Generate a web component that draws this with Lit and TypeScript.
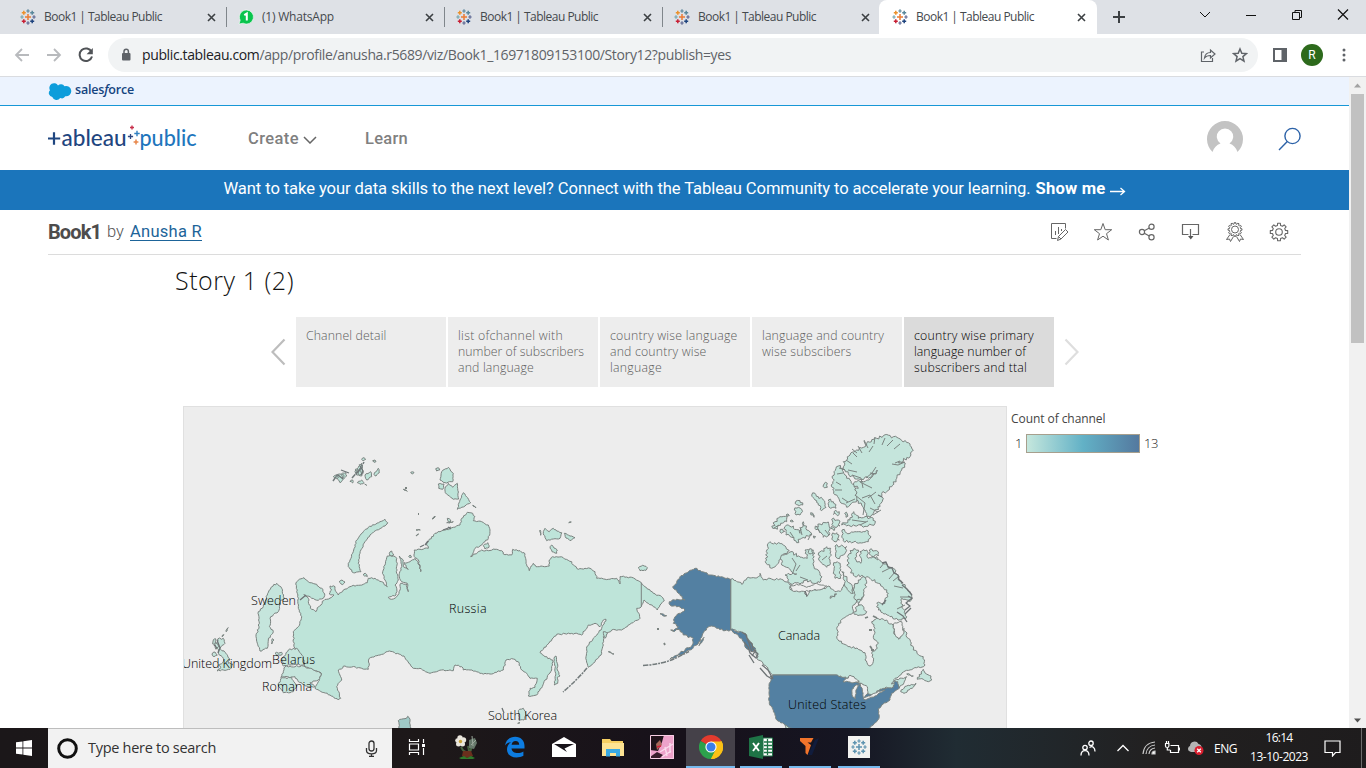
import { LitElement, html, svg, css } from "lit";
import { customElement, property } from "lit/decorators.js";

/** One line of text, tracked so that it fills a given width. */
@customElement("fit-text")
class FitText extends LitElement {
  @property({ type: Number }) w = 0;
  static styles = css`
    :host { display: inline-block; white-space: nowrap; }
  `;
  render() {
    return html`<span><slot></slot></span>`;
  }
  firstUpdated() {
    const s = this.renderRoot.querySelector("span") as HTMLElement;
    const n = (this.textContent || "").trim().length;
    if (!this.w || !n) return;
    s.style.letterSpacing = (this.w - s.getBoundingClientRect().width) / n + "px";
  }
}

/* ---------- map geometry ---------- */
type Pt = [number, number, boolean];
type Src = [number, number, string];

// A point starting with "!" is reached by a straight border; the others by coastline.
const points = ([ox, oy, s]: Src): Pt[] =>
  s.trim().split(/\s+/).map((t) => {
    const straight = t[0] === "!";
    const [x, y] = t.replace("!", "").split(",").map(Number);
    return [ox + x / 3, oy + y / 3, straight];
  });

const coast = (rough: number, ...src: Src[]) => {
  const p = src.flatMap(points);
  let seed = 7 + p.length * 13;
  const rnd = () => {
    seed = (seed * 16807) % 2147483647;
    return seed / 2147483647 - 0.5;
  };
  let d = "M" + p[0][0].toFixed(1) + "," + p[0][1].toFixed(1);
  for (let i = 1; i <= p.length; i++) {
    const a = p[i - 1];
    const b = p[i % p.length];
    const len = Math.hypot(b[0] - a[0], b[1] - a[1]) || 1;
    const n = b[2] ? 1 : Math.max(1, Math.round(len / 1.7));
    for (let k = 1; k <= n; k++) {
      const j = k < n ? rnd() * rough : 0;
      const x = a[0] + ((b[0] - a[0]) * k) / n - ((b[1] - a[1]) / len) * j;
      const y = a[1] + ((b[1] - a[1]) * k) / n + ((b[0] - a[0]) / len) * j;
      d += "L" + x.toFixed(1) + "," + y.toFixed(1);
    }
  }
  return d + "Z";
};

const W = (s: string): Src => [180, 440, s];
const E = (s: string): Src => [420, 450, s];
const N = (s: string): Src => [630, 550, s];
const A = (s: string): Src => [750, 420, s];

const russia = coast(1.4,
  W("347,432 358,418 372,413 385,425 405,432 425,445 434,462 430,475 415,481 395,475 372,463 385,475 388,495 395,508 408,515 412,503 423,495 427,484 440,478 455,472 462,465 448,462 455,450 450,438 465,440 468,455 475,465 490,450 510,440 530,436 550,433 562,428 565,415 585,415 605,425 622,440 615,420 608,395 615,375 622,348 640,348 650,355 650,400 655,420 645,435 650,445 648,465 625,472 635,478 650,470 660,450 662,430 680,432 685,455 682,430 665,425 657,405 665,380 658,348 670,360 670,380 685,388 672,368 690,365 705,355 718,375 722,395 715,360 703,350 703,330"),
  E("0,298 25,295 20,280 45,250 75,240 100,232 120,225 125,205 142,187 158,190 165,200 160,212 185,215 205,225 210,240 205,265 185,285 165,295 152,320 165,312 185,300 205,302 225,298 245,302 250,312 275,315 278,298 300,302 315,312 318,340 328,362 340,340 348,350 388,348 388,330 398,320 430,323 455,335 460,345 475,358 510,355 525,365 530,385 565,388 590,385 600,402 600,380 635,382 664,398 700,430 725,440 733,452 720,465 712,480 700,470 685,460 672,450 664,470 650,475 660,505 625,525 605,540 575,540 550,560 548,590 545,610 525,635 505,652 498,620 500,590 520,565 545,535 558,508 550,510 540,530 525,520 505,525 485,555 465,550 410,553 360,608 375,620 398,630 395,660 350,735 325,738 330,715 345,712 352,685 330,685 320,670 305,660 295,635 280,627 258,630 250,660 210,672 180,670 150,660 130,660 125,650 105,645 100,662 65,660 30,670 0,655"),
  W("700,685 672,648 628,633 600,645 568,655 565,688 545,685 495,678 475,690 485,720 470,740 482,775 475,780 450,765 405,745 415,725 424,700 375,680 372,660 350,628 342,620 340,575 355,560 365,530 355,500 352,450"));

const eastIsles = [
  W("520,398 505,380 505,370 520,335 530,300 550,275 565,262 600,245 615,238 623,248 615,258 590,270 570,285 555,305 540,340 535,370 543,395"),
  W("460,110 478,102 498,98 500,108 480,128 474,118"), W("525,95 545,70 550,95 545,108 530,105"),
  W("526,88 534,90 532,98"), W("538,74 546,76 542,84"), W("535,96 542,92 546,102 538,106"), W("484,104 492,106 488,114"), W("468,108 476,112 470,116"),
  W("555,105 572,95 575,110 560,120"), W("582,103 595,85 598,98 588,108"), W("532,128 545,120 552,128 540,133"),
  W("545,58 552,53 557,58 550,63"), W("578,62 585,60 588,65 582,67"), W("510,124 518,120 518,129"), W("554,132 560,136"), W("692,97 702,97 698,102"),
  W("670,148 682,154"), W("478,426 486,420 495,426 488,434"), W("550,405 556,400 562,410"), W("628,340 635,333 641,345 630,347"),
  W("758,237 765,229"), W("708,288 716,282"), W("708,270 721,270"), W("686,350 690,345 694,352"),
  E("47,56 54,53 59,60 50,63"), E("65,65 85,52 100,70 98,95 75,98 60,90"), E("55,102 72,102 68,118 56,115"),
  E("75,115 85,100 98,112 112,100 116,147 100,148 88,138 76,128"), E("130,128 152,158 135,168 112,178 120,150"), E("158,166 168,174"),
  E("82,205 92,210 88,220"), E("37,207 46,200"), E("80,218 100,215"), E("370,250 375,235 388,245 400,235 410,243 425,248 420,265 400,267 380,272"),
  E("433,250 450,258 465,263 450,272 438,264"), E("390,295 395,285 402,294 412,300 410,310 396,305"), E("446,218 454,216"), E("360,240 362,256"),
  E("655,354 668,346 682,353 678,361 660,362"), E("402,625 408,618 412,640 412,660 420,678 412,682 413,700 403,705 407,670"),
  E("550,545 562,550 555,565"), E("565,605 582,612"), E("190,287 204,278 207,292 195,297"),
].map((s) => coast(1.1, s));

const europe = [
  W("290,430 275,440 262,465 250,500 235,515 237,560 228,590 240,633 262,625 265,600 280,575 268,560 272,530 295,515 300,485 313,475 305,445"),
  W("113,597 130,595 135,610 120,625 138,640 148,655 145,670 158,672 150,688 130,690 112,693 122,682 115,675 128,668 130,655 118,645 112,625"),
  W("96,642 105,636 112,645 102,650"), W("100,600 108,597 106,610 98,612"), W("138,575 145,563"), W("106,608 116,620 108,628"), W("126,590 132,584"),
  W("275,612 282,600 277,596"), W("325,630 350,625 370,650 372,675 340,674 310,678 305,660"), W("285,640 305,637 305,645 290,647"),
  W("315,680 370,678 400,690 424,700 415,720 390,728 405,740 385,740 355,725 345,710 302,712"),
  W("302,716 335,712 350,738 340,755 310,758 295,735"),
  E("295,782 310,775 318,795 312,810 298,812"), E("293,820 300,818"),
].map((s) => coast(1.5, s));

const canada = coast(2.4,
  N("302,88 318,92 335,103 350,85 385,80 390,70 400,90 420,85 460,90 485,105 480,118 500,120 520,118 530,140 540,115 560,120 600,110 615,125 635,120 645,100 660,110 668,130 675,100 690,110 700,130 695,150 670,165 668,190 640,205 622,230 620,260 635,280 660,290 690,300 705,308 705,330 720,348 730,335 725,310 742,295 742,275 730,262 735,235 725,215 740,205 770,210 790,230 795,255 810,265 822,235 835,265 850,300 880,320 885,345 860,353 825,363 795,385 785,402 800,393 790,412 750,418 735,432 708,440 712,425 700,405 690,400 660,385 635,382 618,375 !428,375 410,350 385,330 375,305 370,290 345,250 302,240 !302,88"));

const arctic = [
  A("285,150 280,125 300,105 320,90 345,80 350,70 380,55 400,47 430,50 455,62 475,68 490,90 480,110 445,128 466,130 455,150 440,175 425,200 410,215 395,220 398,240 390,260 370,280 350,292 345,270 335,255 320,240 310,215 325,205 305,195 320,185 350,180 370,165 382,150 360,172 330,178 300,170"),
  A("265,138 278,145 285,165 300,180 312,200 320,230 320,245 300,255 290,262 270,245 260,225 248,210 248,185 252,155"),
  A("275,315 300,300 312,275 325,295 345,290 370,295 375,310 355,318 300,318"),
  A("276,330 300,340 330,335 355,333 363,350 355,365 320,368 280,362"),
  A("245,298 265,300 270,318 250,318"), A("245,345 260,338 268,360 250,362"), A("252,275 268,275 268,283 250,283"), A("284,280 292,282 288,292"),
  A("55,370 75,368 100,375 118,392 97,410 85,430 65,445 48,430"),
  A("92,412 120,396 155,412 172,415 165,390 190,390 192,440 210,460 213,482 190,490 170,480 150,492 118,488 105,465 140,462 95,435"),
  A("205,405 230,380 242,385 240,425 230,442 215,430"), A("255,378 290,380 280,405 262,415"), A("250,435 262,425 272,440 272,475 255,475"),
  A("295,440 295,405 310,387 325,390 318,420 332,430 330,395 350,390 355,415 380,410 400,430 430,445 450,480 468,505 485,525 480,545 455,535 455,560 470,590 455,600 420,590 385,570 380,550 405,550 415,520 385,490 360,475 310,465"),
  A("358,390 380,392 385,408 362,406"), A("313,583 325,550 350,575 330,585"), A("340,470 350,490 340,530 320,545 310,510 325,480"), A("275,455 300,490 310,520 285,500"),
  A("133,270 145,262 155,268 150,285 138,285"), A("135,250 150,242 158,255"), A("68,325 75,305 90,290 112,288 110,305 92,310 82,328"),
  A("105,320 130,318 150,340 160,305 170,330 185,345 155,355 140,368 125,352 108,345"),
  A("185,225 195,220 205,230 220,240 228,262 215,272 205,255 195,240"), A("235,240 250,245 258,265 242,265"),
  A("195,325 210,312 235,306 240,325 238,345 220,352 210,335"), A("222,192 232,190 232,202 224,204"), A("182,278 192,292"), A("108,285 118,287"), A("120,303 130,305"), A("240,535 260,522"),
  A("90,335 98,328 104,334 94,340"), A("176,392 186,388 190,400 180,402"), A("190,348 197,350 192,355"), A("242,325 250,322 252,332"),
].map((s) => coast(3, s));

const atlantic = [
  N("862,388 880,358 886,370 903,378 905,390 895,395 880,388"), N("785,402 800,388 830,380 822,398 808,414 800,398"),
  N("812,425 830,408 858,400 850,412 822,430"), N("830,372 850,378"), N("465,526 505,530 540,540 470,540"),
].map((s) => coast(1.8, s));

const usa = [
  coast(1.2, N("428,375 !618,375 635,382 660,387 690,402 700,420 710,432 735,432 750,418 790,412 795,393 803,395 808,415 785,430 780,450 755,465 745,480 748,500 740,515 710,540 !500,540 475,532 462,522 440,510 430,480 418,460 417,430 418,400")),
  coast(1.7, N("302,88 !302,240 285,242 265,235 245,228 230,235 215,262 200,285 180,300 150,315 120,328 150,308 185,288 190,265 160,255 150,240 128,243 145,230 130,220 135,200 165,180 160,175 120,165 118,155 140,148 165,150 145,130 128,110 140,100 150,80 175,65 195,55 215,65 240,75 275,80")),
  coast(2, N("302,238 320,245 345,250 358,275 377,298 370,306 352,298 335,265 312,250")),
  coast(1, N("207,287 220,270 222,262 210,278")), coast(1, N("90,191 110,197 104,199")), coast(1, N("122,240 132,243")),
];
const lakes = [
  coast(1.5, N("640,396 660,376 672,380 688,394 672,398 660,396")), coast(1, N("668,440 666,418 678,404 688,404 678,420 676,446")),
  coast(1, N("690,400 712,410 714,430 700,445 697,420")), coast(1, N("700,446 725,434 745,424 765,420 735,438 705,450")),
  coast(1.4, N("790,222 815,215 822,250 806,268 794,252")),
  coast(1.5, N("480,112 500,102 530,112 560,100 590,108 575,118 520,124 490,124")),
];
const inlets = "M864,440l4,8M875,437l-1,7M885,438l-3,7M893,440l-6,6M900,444l-6,5M873,446l-4,6M852,449l5,4M858,446l4,7M864,441l2,5M905,462l-7,3l-6,-1M900,461l-5,2M846,460l6,4M853,453l4,4M866,478l6,-5l4,-6M870,473l6,1M848,470l9,2M852,475l9,3l2,10M860,482l12,6M855,495l10,8l-2,12M862,498l8,-3l5,9M876,492l-8,6M870,508l8,4M873,515l8,-5M842,498l6,4M836,482l5,3M835,490l7,0M839,468l6,2M837,474l6,-1M846,503l9,-4M852,520l14,2M860,525l8,-4M878,560l-6,-4M885,562l-5,6M890,568l-8,4M895,572l-6,7M898,577l-5,4M903,588l-9,-2M910,597l-10,0M905,605l-8,4M790,532l4,6M800,527l2,8M808,540l3,-6M817,527l3,6M774,528l5,-3M825,530l4,5M792,558l4,6l-3,8M800,565l-4,6M808,580l-8,-3M822,560l5,-4";
const rocks = "M742,632l4,3l2,6l4,3l1,5l5,5l-2,4l-6,-5l-2,-6l-4,-5M748,640l4,12M756,650l-4,6M762,665l6,5l5,9M760,668l7,8l5,3M749,655l5,8M773,678l-3,-2M886,600l-4,5M908,596l4,2l-6,5l4,3l-5,4M911,608l-6,6M217,640l3,8l-2,5M214,645l3,3M360,466l3,5l-2,4M356,474l5,-6M338,475l5,4M341,470l8,3M502,708l2,5M425,545l3,-4M420,547l4,-2M443,530l8,-3M448,527l3,2M300,600l6,-5M878,495l4,2M882,563l4,-1l2,5l4,1l2,5l4,2l1,5l4,3M902,585l5,4l5,6M805,591l2,5M897,612l6,4l4,6";

const fitted = (x: number, y: number, w: number, t: string) =>
  svg`<text class="place" x=${x} y=${y} textLength=${w} lengthAdjust="spacing">${t}</text>`;

/* ---------- icons ---------- */
const cross = (x: number, y: number, r: number, c: string, w = 1.2) =>
  svg`<path d="M${x - r},${y}h${2 * r}M${x},${y - r}v${2 * r}" stroke=${c} stroke-width=${w} fill="none"/>`;
const mark = (mono = "") => html`<svg width="16" height="16" viewBox="0 0 16 16">
  ${cross(8, 8, 3, mono || "#eb7b35", 1.5)} ${cross(8, 2, 1.7, mono || "#5b879b")} ${cross(8, 14, 1.7, mono || "#5b6591")}
  ${cross(2, 8, 1.7, mono || "#74a5ad")} ${cross(14, 8, 1.7, mono || "#5b6591")} ${cross(3.8, 3.8, 2, mono || "#eb912c", 1.5)}
  ${cross(12.2, 3.8, 2, mono || "#59879b", 1.5)} ${cross(3.8, 12.2, 2, mono || "#c72035", 1.5)} ${cross(12.2, 12.2, 2, mono || "#1f447e", 1.5)}
</svg>`;
const cogPath = (cx: number, cy: number, r1: number, r2: number, n: number) => {
  let d = "";
  for (let i = 0; i < n; i++) {
    [[-0.3, r1], [-0.2, r2], [0.2, r2], [0.3, r1]].forEach(([o, r]) => {
      const a = ((i + o) * 2 * Math.PI) / n;
      d += (d ? "L" : "M") + (cx + Math.cos(a) * r).toFixed(2) + "," + (cy + Math.sin(a) * r).toFixed(2);
    });
  }
  return d + "Z";
};
const whatsapp = html`<svg width="16" height="16" viewBox="0 0 16 16"><path d="M8.500 1a7 7 0 1 1-3.300 13.200L1 15l1.200-3.800A7 7 0 0 1 8.500 1z" fill="#09c44d" stroke="#fff" stroke-width=".6"/><path d="M6.300 6.200L8.800 4.600V11.500" stroke="#fff" stroke-width="2" fill="none"/></svg>`;
const closeX = html`<svg width="9" height="9" viewBox="0 0 9 9"><path d="M1 1l7 7M8 1l-7 7" stroke="#3c4043" stroke-width="1.6"/></svg>`;

@customElement("app-root")
class AppRoot extends LitElement {
  static styles = css`
    :host { display: block; width: 1366px; height: 768px; overflow: hidden; background: #fff; font-family: "Open Sans", "Noto Sans", sans-serif; color: #202124; }
    * { box-sizing: border-box; }
    svg { display: block; flex: none; }
    .win { display: flex; flex-direction: column; height: 768px; }
    .tabs { height: 34px; flex: none; background: #dee1e6; display: flex; padding-left: 9px; font-size: 12px; }
    .tab { width: 218px; height: 34px; display: flex; align-items: center; padding: 0 10px 0 11px; border-right: 1px solid transparent; position: relative; }
    .sep::after { content: ""; position: absolute; right: -1px; top: 7px; width: 1px; height: 20px; background: #80868b; }
    .ttl { flex: 1; padding-left: 8px; color: #45494d; line-height: 16px; }
    .active { background: #fff; border-radius: 8px 8px 0 0; margin-left: -2px; padding-left: 13px; width: 218px; }
    .plus { width: 44px; display: grid; place-items: center; }
    .wc { margin-left: 41px; display: flex; height: 29px; }
    .wc div { width: 46px; display: grid; place-items: center; }
    .bar { height: 43px; flex: none; display: flex; align-items: center; padding-left: 6px; border-bottom: 1px solid #dadce0; }
    .nav { width: 32px; display: grid; place-items: center; }
    .side { margin-left: 6px; }
    .omni { width: 1150px; height: 34px; border-radius: 17px; background: #f1f3f4; display: flex; align-items: center; margin-left: 6px; padding: 0 2px 0 13px; font-size: 14px; }
    .url { flex: 1; margin: -1px 0 0 11px; color: #5f6368; }
    .url b { font-weight: 400; color: #202124; }
    .oi { width: 32px; display: grid; place-items: center; }
    .me { width: 22px; height: 22px; border-radius: 50%; background: #2d6a1c; color: #fff; font: 12px/22px Roboto, sans-serif; text-align: center; }
    .view { height: 651px; flex: none; display: flex; }
    .page { width: 1349px; height: 651px; overflow: hidden; }
    .sb { width: 17px; background: #f1f1f1; display: flex; flex-direction: column; align-items: center; padding: 6px 0 5px; justify-content: space-between; }
    .thumb { width: 13px; height: 249px; background: #c1c1c1; margin-top: 6px; }
    .fill { flex: 1; }
    .sf { height: 29px; background: #ecf3fe; border-bottom: 1px solid #1797d6; padding: 0 48px; display: flex; align-items: center; }
    .sf fit-text { font: 600 12.5px/16px "Open Sans", sans-serif; color: #14437f; margin: -2px 0 0 3px; }
    .head { height: 64px; display: flex; align-items: center; padding: 1px 48px 0; }
    .menu { font: 500 16.5px/20px Roboto, sans-serif; color: #7f8080; display: flex; align-items: center; }
    .create { margin-left: 52px; width: 117px; }
    .create svg { margin: 3px 0 0 4px; }
    .logo { font: 500 23px Lato, sans-serif; }
    .right { margin-left: auto; display: flex; align-items: center; gap: 35px; margin-right: -1px; }
    .ban { height: 40px; background: #1b75bb; color: #fff; font: 400 16.6px/38px Roboto, sans-serif; display: flex; justify-content: center; align-items: center; padding-bottom: 2px; }
    .show { font-weight: 700; margin: 0 4px 0 5px; display: flex; }
    .ban svg { margin-top: 4px; }
    .tl { margin: 0 48px; height: 45px; border-bottom: 1px solid #dcdcdc; display: flex; align-items: center; font: 400 16.5px/20px Roboto, sans-serif; color: #555; }
    .tl h1 { margin: 0; font: 700 20px/22px Roboto, sans-serif; color: #4d4c4c; }
    .by { margin: 0 6px 0 6px; font-weight: 300; }
    .tl a { color: #1d6499; display: block; height: 18px; line-height: 18px; border-bottom: 1px solid #1d6499; }
    .acts { margin-left: auto; display: flex; }
    .acts div { width: 44px; display: grid; place-items: center; }
    .story { padding: 6px 0 0 175px; height: 62px; font: 300 25px/38px "Open Sans", sans-serif; color: #111; }
    .cards { display: flex; align-items: center; padding-left: 271px; height: 70px; gap: 2px; }
    .cards > svg:first-child { margin-right: 8px; }
    .cards > svg:last-child { margin-left: 8px; }
    .card { width: 150px; height: 70px; background: #ededed; color: #5c5c5c; font: 300 12.3px/16px "Open Sans", sans-serif; padding: 11px 0 0 10px; display: flex; flex-direction: column; align-items: flex-start; }
    .on { background: #dbdbdb; color: #000; }
    .viz { display: flex; margin: 19px 0 0 183px; height: 322px; overflow: hidden; }
    .map { width: 824px; height: 322px; background: #ededed; border: solid #e0e0e0; border-width: 1px 1px 0 1px; flex: none; }
    .place { font: 300 12.5px "Open Sans", sans-serif; fill: #000; }
    .legend { padding: 4px 0 0 4px; font: 400 12px/18px "Open Sans", sans-serif; color: #444; }
    .scale { display: flex; align-items: center; height: 19px; margin-top: 6px; padding-left: 4px; }
    .scale fit-text { font-weight: 300; margin-top: -2px; font-size: 13px; color: #222; }
    .ramp { width: 114px; height: 19px; border: 1px solid #a79f8d; background: linear-gradient(90deg, #c5e7dd, #62b1c6 50%, #54799f); margin: 0 4px 0 4px; }
    .task { height: 40px; flex: none; display: flex; color: #fff; background: linear-gradient(90deg, #1b1719 0, #1d1819 32%, #17111a 50%, #151522 62%, #202c33 70%, #222020 85%, #1e1c1d); }
    .start { width: 48px; display: grid; place-items: center; }
    .find { width: 344px; background: #f2f2f2; border-top: 1px solid #bdbdbd; display: flex; align-items: center; padding: 0 14px 1px 9px; font-size: 14.5px; color: #333; }
    .find fit-text { flex: 1; margin: -1px 0 0 10px; }
    .app { width: 49px; display: grid; place-items: center; border-bottom: 2px solid transparent; }
    .run { border-image: linear-gradient(90deg, transparent 10%, #76b9ed 10%, #76b9ed 92%, transparent 92%) 1; border-bottom: 2px solid; border-top: 0; border-left: 0; border-right: 0; }
    .cur { background: #454149; border-bottom-color: #76b9ed; margin-right: 1px; }
    .tray { margin-left: auto; display: flex; align-items: center; font-size: 12px; padding-right: 4px; }
    .people { margin-right: 21px; }
    .up { margin-right: 13px; }
    .wifi { margin-right: 8px; }
    .power { margin-right: 8px; }
    .cloud { margin-right: 9px; }
    .clock { display: flex; flex-direction: column; align-items: center; width: 60px; margin: -1px 15px 0 12px; line-height: 18.5px; }
    .edge { width: 1px; height: 40px; background: #6b6b6b; margin-left: 20px; }
  `;

  private tab(icon: unknown, title: string, w: number, cls: string) {
    return html`<div class="tab ${cls}">${icon}<div class="ttl"><fit-text w=${w}>${title}</fit-text></div>${closeX}</div>`;
  }

  private card(lines: [string, number][], on = false) {
    return html`<div class="card ${on ? "on" : ""}">${lines.map(([t, w]) => html`<fit-text w=${w}>${t}</fit-text>`)}</div>`;
  }

  private browser() {
    const t = "Book1 | Tableau Public";
    const k = (d: string, w = 1) => html`<div><svg width="12" height="12" viewBox="0 0 12 12"><path d=${d} fill="none" stroke="#111" stroke-width=${w}/></svg></div>`;
    return html`
      <div class="tabs">
        ${this.tab(mark(), t, 118, "sep")}${this.tab(whatsapp, "(1) WhatsApp", 72, "sep")}${this.tab(mark(), t, 118, "sep")}${this.tab(mark(), t, 118, "")}${this.tab(mark(), t, 118, "active")}
        <div class="plus"><svg width="12" height="12" viewBox="0 0 12 12"><path d="M6 0v12M0 6h12" stroke="#3c4043" stroke-width="2"/></svg></div>
        <div class="wc">${k("M1 3l5 5 5-5")}${k("M1 6.5h10")}${k("M1.500 3.500h7v7h-7zM4 3.500v-2h6.500v7H8.500")}${k("M1 .500l10 10M11 .500L1 10.500", 1.2)}</div>
      </div>
      <div class="bar">
        <div class="nav"><svg width="16" height="16" viewBox="0 0 16 16" fill="none" stroke="#b8babd" stroke-width="1.8"><path d="M15 8H2M8 2L2 8l6 6"/></svg></div>
        <div class="nav"><svg width="16" height="16" viewBox="0 0 16 16" fill="none" stroke="#b8babd" stroke-width="1.8"><path d="M1 8h13M8 2l6 6-6 6"/></svg></div>
        <div class="nav"><svg width="16" height="16" viewBox="0 0 16 16"><path d="M13.600 5A6.300 6.300 0 1 0 14 9.500" fill="none" stroke="#505357" stroke-width="2"/><path d="M14.800 1v6.200H8.600z" fill="#505357"/></svg></div>
        <div class="omni">
          <svg width="10" height="14" viewBox="0 0 10 14"><rect x="1" y="5" width="8.500" height="7.500" rx="1" fill="#5f6368"/><path d="M3 6V3.500a2.200 2.200 0 0 1 4.400 0V6" fill="none" stroke="#5f6368" stroke-width="1.500"/></svg>
          <div class="url"><fit-text w="589"><b>public.tableau.com</b>/app/profile/anusha.r5689/viz/Book1_16971809153100/Story12?publish=yes</fit-text></div>
          <div class="oi"><svg width="16" height="16" viewBox="0 0 16 16" fill="none" stroke="#5f6368" stroke-width="1.200"><path d="M4 5H1.500v9.500h11V11M4.500 11c.5-4 3-5.500 6-5.500V3l4.500 4-4.500 4V8.500C8 8.500 6 9 4.500 11z"/></svg></div>
          <div class="oi"><svg width="16" height="16" viewBox="0 0 16 16" fill="none" stroke="#5f6368" stroke-width="1.500"><path d="M8 2l1.800 4.200 4.600.4-3.500 3 1.100 4.500L8 11.700l-4 2.400 1.100-4.500-3.500-3 4.600-.4z"/></svg></div>
        </div>
        <div class="nav side"><svg width="14" height="14" viewBox="0 0 14 14"><path d="M0 0h14v14H0zM2 2v10h6.500V2z" fill="#5f6368" fill-rule="evenodd"/></svg></div>
        <div class="nav"><div class="me">R</div></div>
        <div class="nav"><svg width="4" height="14" viewBox="0 0 4 14" fill="#5f6368"><circle cx="2" cy="2" r="1.500"/><circle cx="2" cy="7" r="1.500"/><circle cx="2" cy="12" r="1.500"/></svg></div>
      </div>`;
  }

  private map() {
    return html`<div class="map"><svg width="822" height="321" viewBox="184 407 822 321">
      <g stroke="#7b8380" stroke-width="1" stroke-linejoin="round">
        <g fill="#bee4d9"><path d=${russia}/>${eastIsles.map((d) => svg`<path d=${d}/>`)}<path d="M641.300,582.700V606.500" fill="none"/></g>
        <g fill="#c5e5dc">${europe.map((d) => svg`<path d=${d}/>`)}<path d=${canada}/>${arctic.map((d) => svg`<path d=${d}/>`)}${atlantic.map((d) => svg`<path d=${d}/>`)}</g>
        <g fill="#5380a2">${usa.map((d) => svg`<path d=${d}/>`)}</g>
        <g fill="#ededed">${lakes.map((d) => svg`<path d=${d}/>`)}</g>
        <path d=${coast(1.5, W("655,842 675,836 683,829 690,838 693,870 660,870"))} fill="#9fcac7"/>
        <path d=${inlets} fill="none"/>
        <path d=${rocks} fill="none" stroke="#6d7375" stroke-width="1.300"/>
        <path d="M587,668q-10,12 -24,24M643,665.500q20,-1.500 32,-7l14,-7M333,481l5,-7M352,478l8,-9l4,-7" fill="none" stroke="#727a7b" stroke-width="1.500" stroke-dasharray="5 1 2 1"/>
        <path d="M870,646l2,3M871,650h3M657,629h2M664,643l1,2M405,488h2M418,514h1M865,618l3,-1M873,616l4,2M869,630h3" fill="none" stroke-width="1.800"/>
      </g>
      ${fitted(251, 605, 45, "Sweden")}${fitted(449, 613, 37.5, "Russia")}${fitted(272, 664, 43, "Belarus")}
      ${fitted(182, 668, 90, "United Kingdom")}${fitted(262, 691, 50, "Romania")}${fitted(488, 720, 69, "South Korea")}
      ${fitted(778, 640, 42, "Canada")}${fitted(788, 709, 78, "United States")}
    </svg></div>`;
  }

  private site() {
    return html`<div class="page">
      <div class="sf">
        <svg width="24" height="17" viewBox="0 0 24 17"><path d="M10 2.500A4.300 4.300 0 0 1 16.500 3.200 5.200 5.200 0 1 1 17.300 13.300 4 4 0 0 1 12.200 15 4.500 4.500 0 0 1 4.300 14 4 4 0 0 1 2 7.200 4.600 4.600 0 0 1 10 2.500z" fill="#0d9ddb"/></svg>
        <fit-text w="59">sales<i>f</i>orce</fit-text>
      </div>
      <div class="head">
        <svg width="154" height="34" viewBox="48 121 154 34">
          ${cross(54, 137.5, 6.2, "#1f4680", 2.2)}
          <text class="logo" x="61.500" y="145" textLength="65" lengthAdjust="spacingAndGlyphs" fill="#1f4680">ableau</text>
          ${cross(130.5, 135.5, 2.6, "#2f4780", 1.3)}${cross(132, 126.5, 2, "#c8304c", 1.4)}${cross(137, 132.5, 2.7, "#2f7fc0", 1.4)}${cross(136, 141, 2.4, "#e8864a", 1.5)}
          <text class="logo" x="139.500" y="145" textLength="57" lengthAdjust="spacingAndGlyphs" fill="#1e76bd">public</text>
        </svg>
        <div class="menu create" style="margin-left:46px"><fit-text w="51">Create</fit-text><svg width="14" height="8" viewBox="0 0 14 8"><path d="M1 1l6 6 6-6" fill="none" stroke="#666" stroke-width="1.500"/></svg></div>
        <div class="menu"><fit-text w="43">Learn</fit-text></div>
        <div class="right">
          <svg width="36" height="36" viewBox="0 0 36 36"><path d="M5.500 31A18 18 0 1 1 30.500 31C29 26.500 26.500 24 22.500 22.500A8.200 8.200 0 1 0 13.500 22.500C9.500 24 7 26.500 5.500 31z" fill="#c3c3c3"/></svg>
          <svg width="24" height="24" viewBox="0 0 24 24" fill="none" stroke="#2c62a8" stroke-width="1.400"><circle cx="14.500" cy="9" r="7.600"/><path d="M9.300 14.500L1 23"/></svg>
        </div>
      </div>
      <div class="ban"><fit-text w="807">Want to take your data skills to the next level? Connect with the Tableau Community to accelerate your learning.</fit-text><span class="show"><fit-text w="70">Show me</fit-text></span>
        <svg width="16" height="9" viewBox="0 0 16 9"><path d="M0 4.500h14M10.500 1L14.500 4.500l-4 3.500" fill="none" stroke="#fff" stroke-width="1.300"/></svg></div>
      <div class="tl">
        <h1><fit-text w="53">Book1</fit-text></h1><span class="by"><fit-text w="17">by</fit-text></span><a><fit-text w="72">Anusha R</fit-text></a>
        <div class="acts">
          <div><svg width="20" height="20" viewBox="0 0 20 20" fill="none" stroke="#666"><path d="M16.500 6.500v-5h-14v15h5M6.500 13V9M9.500 12V5M12.500 9V7M8.500 18.500l1-4 7-7 2.500 2.500-7 7zM9.500 14.500l2.500 2.500"/></svg></div>
          <div><svg width="20" height="20" viewBox="0 0 20 20" fill="none" stroke="#666"><path d="M10 1.500l2.200 6.200h6.500l-5.200 4 1.900 6.300-5.400-3.800L4.600 18l1.900-6.300-5.200-4h6.500z"/></svg></div>
          <div><svg width="20" height="20" viewBox="0 0 20 20" fill="none" stroke="#666" stroke-width="1.200"><circle cx="5" cy="10" r="2.600"/><circle cx="14.500" cy="4.800" r="2.600"/><circle cx="14.500" cy="15.200" r="2.600"/><path d="M7.300 8.700l5-2.700M7.300 11.300l5 2.700"/></svg></div>
          <div><svg width="20" height="20" viewBox="0 0 20 20" fill="none" stroke="#666"><path d="M7.500 12.500h-6v-10h16v10h-6M9.500 7v9" stroke-width="1.200"/><path d="M7 14h5.500l-2.700 3.500z" fill="#555" stroke="none"/></svg></div>
          <div><svg width="20" height="20" viewBox="0 0 20 20" fill="none" stroke="#666"><path d=${cogPath(10, 7.5, 5.6, 7, 12)}/><circle cx="10" cy="7.500" r="3.500"/><path d="M5 12.500l-3.500 5 3-.5 1 2.500 3-5M15 12.500l3.500 5-3-.5-1 2.500-3-5"/></svg></div>
          <div><svg width="20" height="20" viewBox="0 0 20 20" fill="none" stroke="#666" stroke-width="1.100"><path d=${cogPath(10, 10, 6.7, 8.8, 8)} stroke-linejoin="round"/><circle cx="10" cy="10" r="3.300"/></svg></div>
        </div>
      </div>
      <div class="story"><fit-text w="119">Story 1 (2)</fit-text></div>
      <div class="cards">
        <svg width="15" height="28" viewBox="0 0 15 28"><path d="M13.500 1.500L1.500 14l12 12.500" fill="none" stroke="#bdbdbd" stroke-width="2.200"/></svg>
        ${this.card([["Channel detail", 80.5]])}
        ${this.card([["list ofchannel with", 105], ["number of subscribers", 126], ["and language", 76]])}
        ${this.card([["country wise language", 127.5], ["and country wise", 96.5], ["language", 52]])}
        ${this.card([["language and country", 122], ["wise subscibers", 89.5]])}
        ${this.card([["country wise primary", 120], ["language number of", 112], ["subscribers and ttal", 113]], true)}
        <svg width="15" height="28" viewBox="0 0 15 28"><path d="M1.500 1.500L13.500 14l-12 12.500" fill="none" stroke="#dedede" stroke-width="2.200"/></svg>
      </div>
      <div class="viz">${this.map()}
        <div class="legend"><fit-text w="94.500">Count of channel</fit-text><div class="scale"><fit-text w="7">1</fit-text><div class="ramp"></div><fit-text w="14">13</fit-text></div></div>
      </div>
    </div>`;
  }

  private taskbar() {
    return html`<div class="task">
      <div class="start"><svg width="16" height="16" viewBox="0 0 16 16" fill="#fff"><path d="M0 2.300l6.500-.9v6.200H0zM7.300 1.300L16 0v7.600H7.300zM0 8.400h6.500v6.200L0 13.700zM7.300 8.400H16V16l-8.700-1.300z"/></svg></div>
      <div class="find"><svg width="21" height="21" viewBox="0 0 21 21"><circle cx="10.500" cy="10.500" r="8.800" fill="none" stroke="#111" stroke-width="3"/></svg><fit-text w="128">Type here to search</fit-text>
        <svg width="13" height="17" viewBox="0 0 13 17" fill="none" stroke="#333" stroke-width="1.300"><rect x="4" y="1" width="5" height="10" rx="2.500"/><path d="M1.500 8v2.500c0 4.500 10 4.500 10 0V8M6.500 14v2.500M4 16.300h5"/></svg></div>
      <div class="app"><svg width="18" height="16" viewBox="0 0 18 16" fill="none" stroke="#fff" stroke-width="1.200"><path d="M1.500 0v2.500h9V0M1.500 16v-2.500h9V16M1.500 5h9v6h-9zM15.500 0v4M15.500 9v7"/><path d="M14 5h3v3h-3z" fill="#fff" stroke="none"/></svg></div>
      <div class="app"><svg width="24" height="26" viewBox="0 0 24 26"><path d="M14 12q2 5 0 10M7 13q3 6 7 5M17 12q1 5-3 7" stroke="#46633f" stroke-width="2" fill="none"/><path d="M15 6l6-2 2 5-3 6-5-1z" fill="#66786a"/><path d="M18 2l1 10M22 6l-5 5" stroke="#9aa79b"/><g fill="#eae6dd"><circle cx="6" cy="4" r="2.700"/><circle cx="9.500" cy="6" r="2.700"/><circle cx="8.500" cy="10" r="2.500"/><circle cx="4.500" cy="10" r="2.500"/><circle cx="3.500" cy="6.500" r="2.300"/></g><circle cx="6.500" cy="7.500" r="1.700" fill="#c9a23a"/><path d="M9 17h8l2 5-6 2-5-2z" fill="#6a2f1d"/><path d="M5 24l5-2 3 2 4-2 4 2-2 1H7z" fill="#2f7a2b"/></svg></div>
      <div class="app"><svg width="22" height="22" viewBox="0 0 22 22"><path d="M1 9.500C2 3.500 6 .8 11.200.8c5.800 0 9.300 4 9.300 9.200v2.500H7.500c.3 3.200 3 4.600 6.200 4.600 2 0 4-.6 5.700-1.600v4.300c-2 1.200-4.500 1.700-7 1.700C6.500 21.500 3 18 3 13.200c0-3 1.600-5.600 4-7C4 6.500 2.200 8 1 9.500zM7.600 8.700h7.600c0-2.200-1.200-3.700-3.700-3.700-2.200 0-3.600 1.600-3.900 3.700z" fill="#0d7ce0" fill-rule="evenodd"/></svg></div>
      <div class="app"><svg width="24" height="20" viewBox="0 0 24 20"><path d="M0 7L12 0l12 7v13H0z" fill="#fff"/><path d="M2 7h20l-9.500 4.500L15 15z" fill="#171319"/></svg></div>
      <div class="app"><svg width="22" height="19" viewBox="0 0 22 19"><path d="M0 1h8l1.500 2H21v15H0z" fill="#f6cf62"/><path d="M0 5h22v13H0z" fill="#fde393"/><path d="M4 18.500v-7.500h14v7.500h-4V15H8v3.500z" fill="#3aa9e2"/></svg></div>
      <div class="app"><svg width="24" height="24" viewBox="0 0 24 24"><path d="M0 0h24v24H0z" fill="#eda2ca"/><path d="M0 0h14l-2 7-4 9-8-1z" fill="#21131b"/><path d="M6 9l4-4 2 5-5 5z" fill="#a8685a"/><path d="M0 22l7-5 6 3-4 4H0z" fill="#3a1e2c"/><path d="M10 17l13-8M15 12l2 9M12 22l9-6M20 8v10" stroke="#fbdcee" stroke-width="1.400"/><path d="M7 12l4-1" stroke="#d61d3a" stroke-width="1.500"/><path d="M.500.500h23v23H.500z" fill="none" stroke="#f8cfe4"/></svg></div>
      <div class="app cur"><svg width="24" height="24" viewBox="0 0 24 24"><path d="M12 12L1.600 6A12 12 0 0 1 22.400 6z" fill="#e33b2e"/><path d="M12 12L22.400 6A12 12 0 0 1 12 24z" fill="#fbc116"/><path d="M12 12v12A12 12 0 0 1 1.600 6z" fill="#2da14c"/><path d="M7.200 14.800L12 24l4.800-9.200z" fill="#2da14c"/><path d="M16.800 14.800L12 24A12 12 0 0 0 22.700 6.500H12z" fill="#fbc116"/><circle cx="12" cy="12" r="5.600" fill="#fff"/><circle cx="12" cy="12" r="4.500" fill="#3b7ee8"/></svg></div>
      <div class="app run"><svg width="24" height="24" viewBox="0 0 24 24"><path d="M0 3l14-3v24L0 21z" fill="#1e7346"/><path d="M14 3h9.500v18H14z" fill="#fff" stroke="#1e7346"/><path d="M15 7h8M15 10.500h8M15 14h8M15 17.500h8M18.500 4v16" stroke="#1e7346" stroke-width="1.300"/><path d="M4 8l6 8M10 8l-6 8" stroke="#fff" stroke-width="1.900"/></svg></div>
      <div class="app run"><svg width="20" height="18" viewBox="0 0 20 18"><path d="M0 0h13.500L11 4.500H7.500L11 7 7.500 17 5.500 15V8L0 3z" fill="#f1742b"/><path d="M15 2l4-2-7 17H8z" fill="#111c3c"/></svg></div>
      <div class="app run"><svg width="22" height="22" viewBox="-3 -3 22 22"><path d="M-3-3h22v22H-3z" fill="#f2f2f0"/>${mark("#5d93b0")}</svg></div>
      <div class="tray">
        <svg class="people" width="16" height="17" viewBox="0 0 16 17" fill="none" stroke="#fff" stroke-width="1.300"><circle cx="5" cy="7.500" r="2.200"/><path d="M1 15.500c0-6.500 8-6.500 8 0"/><circle cx="11" cy="3.200" r="2.200"/><path d="M9.500 7.500c3-2 5.500 0 5.500 4"/></svg>
        <svg class="up" width="12" height="8" viewBox="0 0 12 8"><path d="M.500 7L6 1.500 11.500 7" fill="none" stroke="#fff" stroke-width="1.300"/></svg>
        <svg class="wifi" width="14" height="14" viewBox="0 0 14 14" fill="none" stroke="#ccc" stroke-width="1.200"><path d="M1 13C1.500 6 6 1.500 13 1M4 13c.4-5 4-8.500 9-9M7 13c.3-3.400 2.600-5.600 6-6"/><path d="M10 13c0-1.700 1.300-3 3-3v3z" fill="#fff"/></svg>
        <svg class="power" width="16" height="14" viewBox="0 0 16 14" fill="none" stroke="#fff" stroke-width="1.200"><path d="M6.500 4.500h8v7h-8V9M1 2.500h4.500M1.500 2.500v2.500q0 1.500 1.700 1.500t1.700-1.500V2.500M2.500 0v2M4.500 0v2M3.300 6.500V9h3"/><path d="M15.500 6.500v3" stroke-width="1.200"/></svg>
        <svg class="cloud" width="17" height="14" viewBox="0 0 17 14"><path d="M1 10a3 3 0 0 1 1-5A4.500 4.500 0 0 1 10.500 3a4 4 0 0 1 3 4.500L8 11H3z" fill="#b5b5b5"/><circle cx="11" cy="9.500" r="4.500" fill="#da1f2f"/><path d="M9.200 7.700l3.600 3.600M12.800 7.700l-3.600 3.600" stroke="#fff" stroke-width="1.300"/></svg>
        <fit-text w="23">ENG</fit-text>
        <div class="clock"><fit-text w="27">16:14</fit-text><fit-text w="58">13-10-2023</fit-text></div>
        <svg width="17" height="17" viewBox="0 0 17 17"><path d="M1 1h15v11.500h-4.500L8.500 16V12.500H1z" fill="none" stroke="#fff" stroke-width="1.200"/></svg>
        <div class="edge"></div>
      </div>
    </div>`;
  }

  render() {
    return html`<div class="win">${this.browser()}
      <div class="view">${this.site()}
        <div class="sb"><svg width="7" height="5" viewBox="0 0 7 5"><path d="M0 4.500L3.500.500 7 4.500z" fill="#a3a3a3"/></svg><div class="thumb"></div><div class="fill"></div><svg width="7" height="5" viewBox="0 0 7 5"><path d="M0 .500L3.500 4.500 7 .500z" fill="#505050"/></svg></div>
      </div>${this.taskbar()}</div>`;
  }
}
